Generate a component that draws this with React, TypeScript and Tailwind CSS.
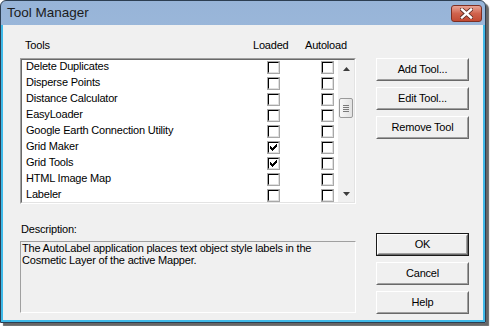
import type { ReactNode } from "react";

const tools = [
  { name: "Delete Duplicates", loaded: false, auto: false },
  { name: "Disperse Points", loaded: false, auto: false },
  { name: "Distance Calculator", loaded: false, auto: false },
  { name: "EasyLoader", loaded: false, auto: false },
  { name: "Google Earth Connection Utility", loaded: false, auto: false },
  { name: "Grid Maker", loaded: true, auto: false },
  { name: "Grid Tools", loaded: true, auto: false },
  { name: "HTML Image Map", loaded: false, auto: false },
  { name: "Labeler", loaded: false, auto: false },
];

const ui = "font-[family-name:'Liberation_Sans',Arial,sans-serif] text-[11px] tracking-[-0.2px] text-black";

function CheckBox({ checked }: { checked: boolean }) {
  return (
    <div className="h-[13px] w-[13px] border border-[#a8a8a8]">
      <div className="relative h-full w-full border-t border-l border-t-black border-l-black border-r border-b border-r-[#e0e0e0] border-b-[#e0e0e0] bg-white">
        {checked && (
          <svg width="7" height="7" viewBox="0 0 7 7" className="absolute left-[1px] top-[1px]" shapeRendering="crispEdges">
            <rect x="6" y="0" width="1" height="3" fill="#000" />
            <rect x="5" y="1" width="1" height="3" fill="#000" />
            <rect x="4" y="2" width="1" height="3" fill="#000" />
            <rect x="3" y="3" width="1" height="3" fill="#000" />
            <rect x="2" y="4" width="1" height="3" fill="#000" />
            <rect x="1" y="3" width="1" height="3" fill="#000" />
            <rect x="0" y="2" width="1" height="3" fill="#000" />
          </svg>
        )}
      </div>
    </div>
  );
}

function Button({ children, isDefault = false }: { children: ReactNode; isDefault?: boolean }) {
  return (
    <div className={`h-[23px] w-[93px] ${isDefault ? "border border-[#1a1a1a]" : ""}`}>
      <div className="h-full w-full border border-t-white border-l-white border-r-[#696969] border-b-[#696969]">
        <div className="flex h-full w-full items-center justify-center border border-t-[#f0f0f0] border-l-[#f0f0f0] border-r-[#a0a0a0] border-b-[#a0a0a0] bg-[#f0f0f0] leading-none">
          {children}
        </div>
      </div>
    </div>
  );
}

function ScrollBar() {
  return (
    <div className="flex h-full w-[16px] flex-col items-center bg-[#f0f0f0]">
      <div className="flex h-[17px] w-full items-center justify-center">
        <svg width="7" height="4" viewBox="0 0 7 4">
          <path d="M3.5 0 L7 4 L0 4 Z" fill="#3c3c3c" />
        </svg>
      </div>
      <div className="mt-[21px] flex h-[20px] w-[14px] flex-col items-center justify-center gap-[1px] rounded-[2px] border border-[#9a9a9a] bg-gradient-to-r from-[#f7f7f7] to-[#e2e2e2]">
        <div className="h-[1px] w-[6px] bg-[#7a7a7a]" />
        <div className="h-[1px] w-[6px] bg-[#7a7a7a]" />
        <div className="h-[1px] w-[6px] bg-[#7a7a7a]" />
        <div className="h-[1px] w-[6px] bg-[#7a7a7a]" />
      </div>
      <div className="flex-1" />
      <div className="flex h-[17px] w-full items-center justify-center">
        <svg width="7" height="4" viewBox="0 0 7 4">
          <path d="M0 0 L7 0 L3.5 4 Z" fill="#3c3c3c" />
        </svg>
      </div>
    </div>
  );
}

export default function App() {
  return (
    <div className={`h-[326px] w-[490px] bg-white ${ui}`}>
      <div className="flex h-[323px] w-[486px] flex-col rounded-t-[6px] border border-[#2c3e52] bg-gradient-to-b from-[#97b4d8] to-[#bdd3ec] shadow-[3px_3px_1px_rgba(0,0,0,0.6)]">
        {/* Title bar */}
        <div className="flex h-[24px] items-start justify-between pl-[6px] pr-[3px]">
          <span className="mt-[4px] text-[13.5px] leading-[16px] tracking-normal text-[#1b1b1b]">Tool Manager</span>
          <div className="mt-[4px] flex h-[17px] w-[31px] items-center justify-center rounded-[3px] border border-[#7d2f23] bg-gradient-to-b from-[#e8a496] via-[#d0634d] to-[#c24a33]">
            <svg width="13" height="11" viewBox="0 0 13 11">
              <path d="M2 1.5 L11 9.5 M11 1.5 L2 9.5" stroke="#5a2a22" strokeWidth="4" strokeLinecap="square" />
              <path d="M2 1.5 L11 9.5 M11 1.5 L2 9.5" stroke="#ffffff" strokeWidth="2.4" strokeLinecap="square" />
            </svg>
          </div>
        </div>

        {/* Client area */}
        <div className="flex flex-1 flex-col border-x-2 border-b-2 border-[#3fb9e8] bg-[#f0f0f0] pl-[17px] pr-[14px]">
          <div className="flex gap-[20px] pt-[13px]">
            <div className="flex w-[336px] flex-col">
              <div className="flex h-[14px] items-center leading-[14px]">
                <span className="w-[233px] pl-[5px]">Tools</span>
                <span className="w-[52px]">Loaded</span>
                <span>Autoload</span>
              </div>
              <div className="mt-[6px] h-[146px] border border-t-[#a0a0a0] border-l-[#a0a0a0] border-r-white border-b-white">
                <div className="flex h-full border border-t-[#696969] border-l-[#696969] border-r-[#e3e3e3] border-b-[#e3e3e3] bg-white">
                  <div className="flex-1 overflow-hidden">
                    {tools.map((t) => (
                      <div key={t.name} className="flex h-[16px] items-start">
                        <span className="w-[245px] pl-[4px] leading-[13px]">{t.name}</span>
                        <div className="mt-[1px] w-[54px]">
                          <CheckBox checked={t.loaded} />
                        </div>
                        <div className="mt-[1px]">
                          <CheckBox checked={t.auto} />
                        </div>
                      </div>
                    ))}
                  </div>
                  <ScrollBar />
                </div>
              </div>
            </div>
            <div className="flex flex-col gap-[6px] pt-[20px]">
              <Button>Add Tool...</Button>
              <Button>Edit Tool...</Button>
              <Button>Remove Tool</Button>
            </div>
          </div>

          <div className="flex gap-[20px]">
            <div className="flex w-[336px] flex-col pt-[18px]">
              <span className="h-[14px] pl-[1px] leading-[14px]">Description:</span>
              <div className="mt-[5px] h-[72px] border border-t-[#a0a0a0] border-l-[#a0a0a0] border-r-white border-b-white px-[1px] leading-[12px]">
                The AutoLabel application places text object style labels in the
                <br />
                Cosmetic Layer of the active Mapper.
              </div>
            </div>
            <div className="flex flex-col gap-[6px] pt-[29px]">
              <Button isDefault>OK</Button>
              <Button>Cancel</Button>
              <Button>Help</Button>
            </div>
          </div>
        </div>
      </div>
    </div>
  );
}
